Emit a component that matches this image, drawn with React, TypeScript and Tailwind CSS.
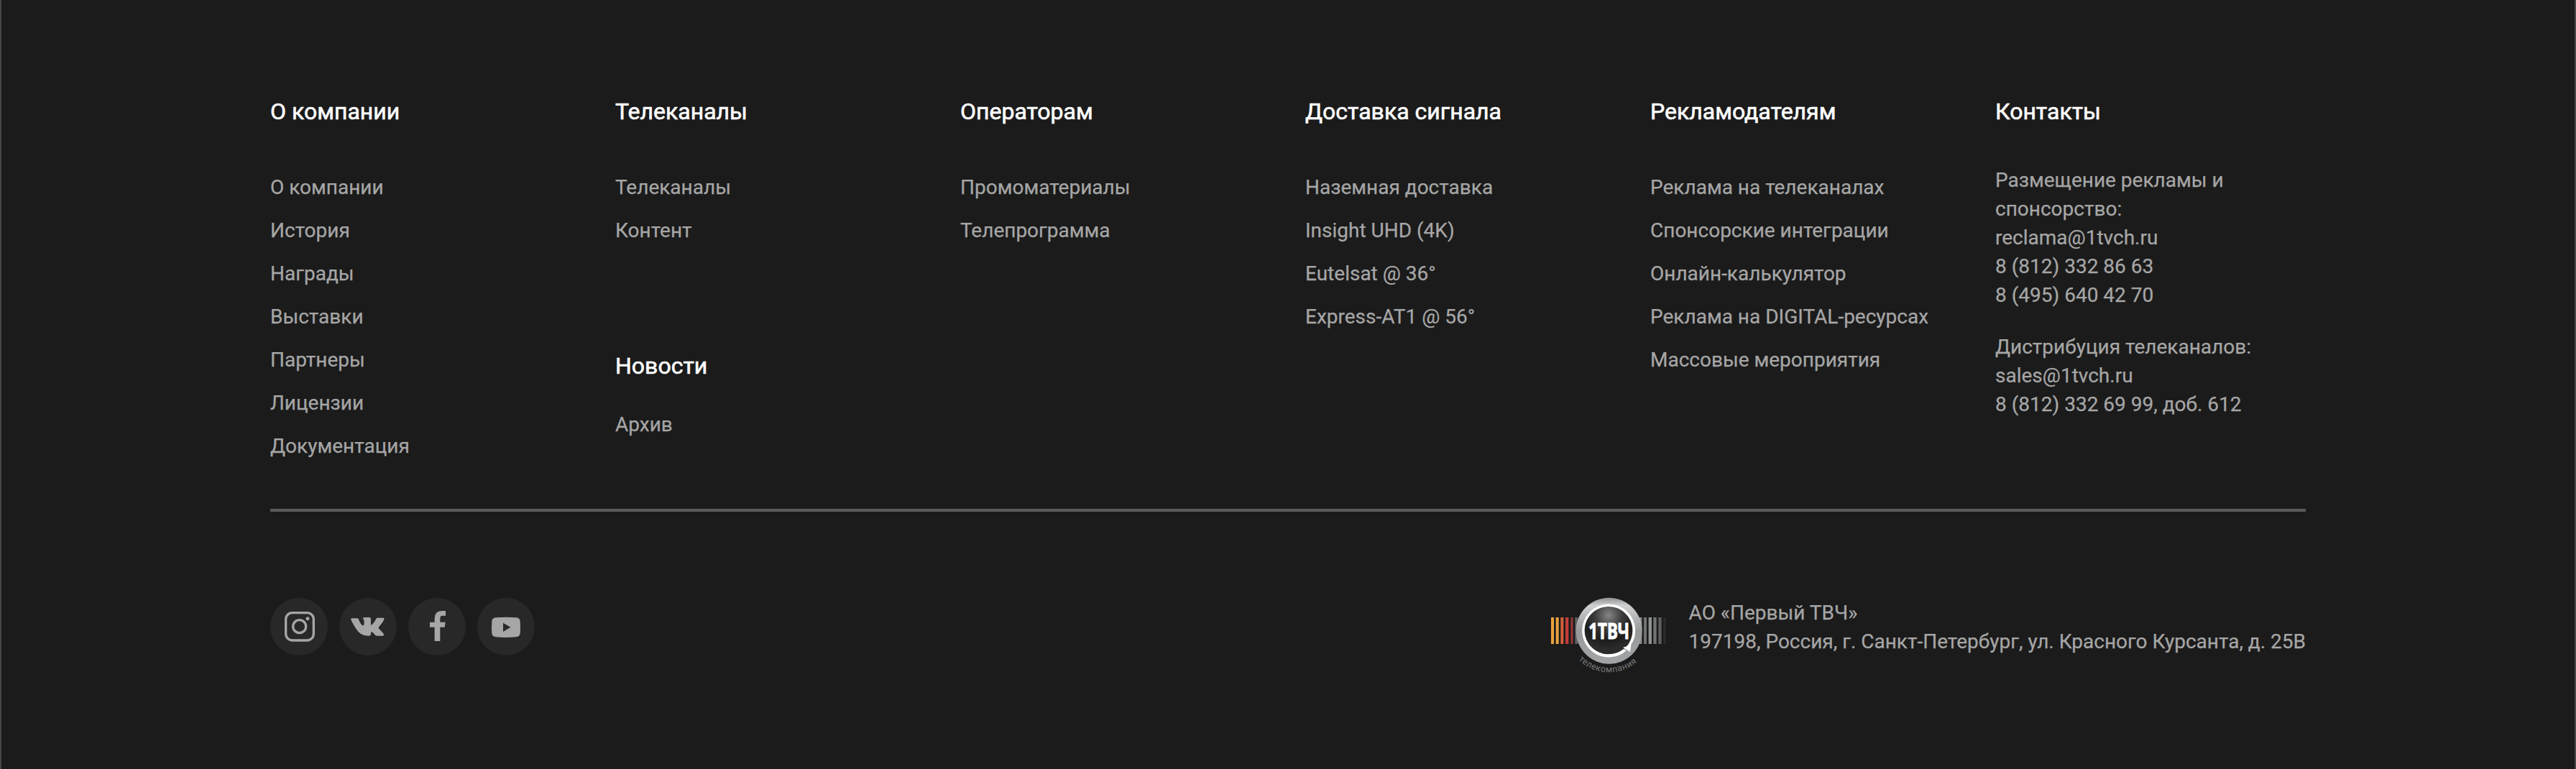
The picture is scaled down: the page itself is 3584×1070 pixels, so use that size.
import type { ReactNode } from "react";

const stripes = [
  { x: 54, w: 12, c: "#e9a13c" },
  { x: 74, w: 12, c: "#e9a13c" },
  { x: 94, w: 12, c: "#d4603c" },
  { x: 114, w: 13, c: "#c23d3a" },
  { x: 136, w: 10, c: "#8f3836" },
  { x: 154, w: 12, c: "#5f6162" },
  { x: 422, w: 11, c: "#8c8c88" },
  { x: 441, w: 12, c: "#717374" },
  { x: 461, w: 13, c: "#8e9091" },
  { x: 481, w: 13, c: "#717374" },
  { x: 502, w: 13, c: "#5c5e5f" },
  { x: 523, w: 10, c: "#2b2b2b" },
];

function Heading({ children }: { children: ReactNode }) {
  return (
    <h3 className="text-[32px] leading-10 font-normal whitespace-nowrap text-white [-webkit-text-stroke:0.6px_#fff]">
      {children}
    </h3>
  );
}

function Links({ items }: { items: string[] }) {
  return (
    <ul className="whitespace-nowrap">
      {items.map((item) => (
        <li key={item} className="h-[60px] leading-[60px]">
          <a>{item}</a>
        </li>
      ))}
    </ul>
  );
}

function Column({ title, items, children }: { title: string; items: string[]; children?: ReactNode }) {
  return (
    <div className="w-[480px] shrink-0">
      <Heading>{title}</Heading>
      <div className="pt-14">
        <Links items={items} />
      </div>
      {children}
    </div>
  );
}

function Social({ children }: { children: ReactNode }) {
  return (
    <a className="size-20 rounded-full bg-[#282828] text-[#a6a6a6]">
      <svg viewBox="0 0 240 240" className="size-20" fill="currentColor">
        {children}
      </svg>
    </a>
  );
}

function Logo() {
  return (
    <svg viewBox="0 0 600 420" className="h-[140px] w-[200px] shrink-0">
      <defs>
        <linearGradient id="rim" x1="0" y1="0" x2="0" y2="1">
          <stop offset="0" stopColor="#8f9192" />
          <stop offset="0.12" stopColor="#cfd0d1" />
          <stop offset="0.5" stopColor="#97999a" />
          <stop offset="1" stopColor="#a2a4a5" />
        </linearGradient>
        <radialGradient id="disc" cx="0.5" cy="0.18" r="0.7">
          <stop offset="0" stopColor="#858687" />
          <stop offset="0.4" stopColor="#3c3c3c" />
          <stop offset="0.75" stopColor="#1d1d1d" />
          <stop offset="1" stopColor="#2a2a2a" />
        </radialGradient>
        <path id="arc" d="M166 322 A182 182 0 0 0 426 322" />
      </defs>
      {stripes.map((s) => (
        <rect key={s.x} x={s.x} y="147" width={s.w} height="111" fill={s.c} />
      ))}
      <circle cx="296" cy="203" r="138" fill="url(#rim)" />
      <circle cx="294" cy="202" r="100" fill="url(#disc)" />
      <path
        d="M368 286 A111 111 0 1 1 405 214 Q403 240 389 258 L384 291 L354 273 L372 267 Q394 240 395 202 A101 100 0 1 0 356 280 Z"
        fill="#fff"
      />
      <text
        x="296"
        y="236"
        textAnchor="middle"
        textLength="170"
        lengthAdjust="spacingAndGlyphs"
        fontSize="90"
        fontWeight="700"
        fill="#fff"
        stroke="#fff"
        strokeWidth="3"
        fontFamily="Open Sans, sans-serif"
      >
        1ТВЧ
      </text>
      <text fontSize="37" fill="#77797a" fontFamily="Roboto, sans-serif">
        <textPath href="#arc" startOffset="3" textLength="268">
          телекомпания
        </textPath>
      </text>
    </svg>
  );
}

export default function App() {
  return (
    <footer className="flex h-[1070px] w-[3584px] flex-col overflow-hidden border-x-2 border-[#464646] bg-[#1b1b1b] px-[374px] pt-[135px] font-[Roboto,sans-serif] text-[28px] text-[#a6a6a6] [-webkit-text-stroke:0.25px_#a6a6a6]">
      <div className="flex h-[573px]">
        <Column
          title="О компании"
          items={["О компании", "История", "Награды", "Выставки", "Партнеры", "Лицензии", "Документация"]}
        />
        <Column title="Телеканалы" items={["Телеканалы", "Контент"]}>
          <div className="pt-[138px]">
            <Heading>Новости</Heading>
            <div className="pt-8">
              <Links items={["Архив"]} />
            </div>
          </div>
        </Column>
        <Column title="Операторам" items={["Промоматериалы", "Телепрограмма"]} />
        <Column
          title="Доставка сигнала"
          items={["Наземная доставка", "Insight UHD (4K)", "Eutelsat @ 36°", "Express-AT1 @ 56°"]}
        />
        <Column
          title="Рекламодателям"
          items={[
            "Реклама на телеканалах",
            "Спонсорские интеграции",
            "Онлайн-калькулятор",
            "Реклама на DIGITAL-ресурсах",
            "Массовые мероприятия",
          ]}
        />
        <div className="w-[432px]">
          <Heading>Контакты</Heading>
          <div className="space-y-8 pt-14 leading-10">
            <p>
              Размещение рекламы и<br />
              спонсорство:
              <br />
              reclama@1tvch.ru
              <br />8 (812) 332 86 63
              <br />8 (495) 640 42 70
            </p>
            <p>
              Дистрибуция телеканалов:
              <br />
              sales@1tvch.ru
              <br />8 (812) 332 69 99, доб. 612
            </p>
          </div>
        </div>
      </div>

      <hr className="h-1 shrink-0 border-0 bg-[#5a5c5b]" />

      <div className="flex items-start justify-between">
        <div className="flex gap-4 pt-[120px]">
          <Social>
            <rect x="65" y="62" width="116" height="115" rx="27" fill="none" stroke="currentColor" strokeWidth="10" />
            <circle cx="122" cy="119" r="27" fill="none" stroke="currentColor" strokeWidth="10" />
            <circle cx="156" cy="86" r="7.5" />
          </Social>
          <Social>
            <path d="M52 85 H75 q4 0 6 4 q8 20 15 25 q5 3 7 -2 q2 -10 0 -20 q-1 -5 -6 -7 q4 -4 12 -4 h16 q7 0 7 8 v20 q0 6 4 3 q10 -8 18 -25 q2 -4 6 -4 h23 q6 0 4 6 q-4 11 -21 31 q-4 5 0 9 q15 14 20 23 q2 6 -4 6 h-26 q-4 0 -7 -4 q-10 -12 -14 -12 q-3 0 -3 7 q0 9 -8 9 q-27 1 -45 -18 q-16 -18 -30 -49 q-2 -6 6 -6z" />
          </Social>
          <Social>
            <path d="M110 180 V122 H90 V101 H110 V86 Q110 54 140 54 H153 Q156 54 156 57 V74 H143 Q133 74 133 84 V101 H155 L152 122 H133 V180 Z" />
          </Social>
          <Social>
            <path
              fillRule="evenodd"
              d="M78 82 Q120 78 162 82 Q178 83 179 98 Q181 122 179 147 Q178 162 162 163 Q120 167 78 163 Q62 162 61 147 Q59 122 61 98 Q62 83 78 82 Z M108 104 V141 L139 122 Z"
            />
          </Social>
        </div>
        <div className="flex">
          <div className="pt-[98px]">
            <Logo />
          </div>
          <p className="ml-[10px] pt-[121px] leading-10 whitespace-nowrap">
            АО «Первый ТВЧ»
            <br />
            197198, Россия, г. Санкт-Петербург, ул. Красного Курсанта, д. 25В
          </p>
        </div>
      </div>
    </footer>
  );
}
